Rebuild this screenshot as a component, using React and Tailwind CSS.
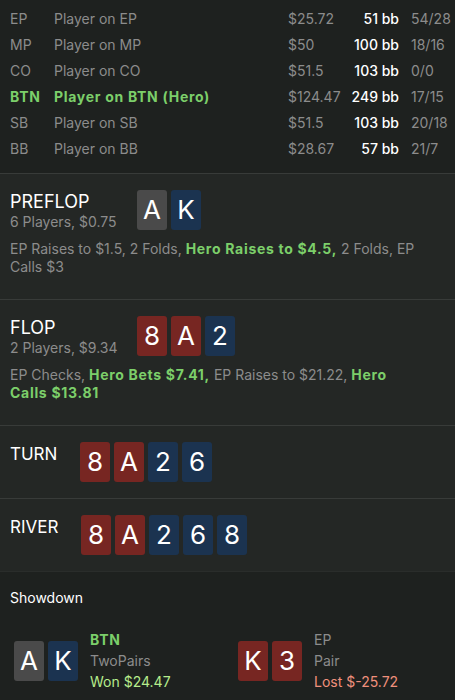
import React from 'react';

const players = [
    { pos: 'EP', name: 'Player on EP', money: '$25.72', bb: '51 bb', stat: '54/28' },
    { pos: 'MP', name: 'Player on MP', money: '$50', bb: '100 bb', stat: '18/16' },
    { pos: 'CO', name: 'Player on CO', money: '$51.5', bb: '103 bb', stat: '0/0' },
    { pos: 'BTN', name: 'Player on BTN (Hero)', money: '$124.47', bb: '249 bb', stat: '17/15', hero: true },
    { pos: 'SB', name: 'Player on SB', money: '$51.5', bb: '103 bb', stat: '20/18' },
    { pos: 'BB', name: 'Player on BB', money: '$28.67', bb: '57 bb', stat: '21/7' },
];

const suitBg = {
    h: 'bg-[#772622]',
    d: 'bg-[#1b3350]',
    s: 'bg-[#4a4a4a]',
};

const Card = ({ rank, suit }) => (
    <div className={`w-[30px] h-[40px] rounded-[3px] flex items-center justify-center text-[26px] leading-none text-white ${suitBg[suit]}`}>
        {rank}
    </div>
);

const Cards = ({ cards }) => (
    <div className="flex gap-[4px]">
        {cards.map((c, i) => (
            <Card key={i} rank={c[0]} suit={c[1]} />
        ))}
    </div>
);

const Hero = ({ children }) => <span className="font-bold tracking-[0.05em] text-[#7ccf6a]">{children}</span>;

const Street = ({ title, sub, cards, titleWidth = 'w-[127px]', titleSize = 'text-[18px]', children }) => (
    <div className="border-t border-[#383b39] bg-[#242725] px-[10px] pt-[16px] pb-[16px]">
        <div className="flex items-start">
            <div className={`${titleWidth} pt-[1px]`}>
                <div className={`${titleSize} leading-[22px] text-white`}>{title}</div>
                {sub && <div className="text-[14px] leading-[18px] text-[#8c8c8c]">{sub}</div>}
            </div>
            <Cards cards={cards} />
        </div>
        {children && (
            <p className="mt-[9px] mb-[7px] w-[414px] text-[14px] leading-[18px] text-[#8c8c8c]">
                {children}
            </p>
        )}
    </div>
);

const ShowdownPlayer = ({ cards, pos, hand, result, won }) => (
    <div className="flex items-center gap-[12px]">
        <Cards cards={cards} />
        <div className="text-[14px] leading-[21px]">
            <div className={won ? 'font-bold tracking-[0.05em] text-[#7ccf6a]' : 'text-[#8c8c8c]'}>{pos}</div>
            <div className="text-[#8c8c8c]">{hand}</div>
            <div className={won ? 'text-[#b6ec8c]' : 'text-[#f0907c]'}>{result}</div>
        </div>
    </div>
);

export default function App() {
    return (
        <div className="min-h-screen bg-[#1e211f] font-['Inter',sans-serif]">
            {/* Players table */}
            <div className="px-[10px] pt-[5px] pb-[12px]">
                {players.map((p) => (
                    <div
                        key={p.pos}
                        className={`flex items-center h-[26px] text-[14px] ${p.hero ? 'font-bold text-[#7ccf6a]' : 'text-[#8c8c8c]'}`}
                    >
                        <div className={`w-[44px] ${p.hero ? 'tracking-[0.05em]' : ''}`}>{p.pos}</div>
                        <div className={`flex-1 ${p.hero ? 'tracking-[0.05em]' : ''}`}>{p.name}</div>
                        <div className="w-[56px] font-normal text-[#8c8c8c]">{p.money}</div>
                        <div className="w-[55px] text-right font-medium text-white">{p.bb}</div>
                        <div className="w-[46px] pl-[12px] font-normal text-[#8c8c8c]">{p.stat}</div>
                    </div>
                ))}
            </div>

            <Street title="PREFLOP" sub="6 Players, $0.75" cards={['As', 'Kd']}>
                EP Raises to $1.5, 2 Folds, <Hero>Hero Raises to $4.5,</Hero> 2 Folds, EP Calls $3
            </Street>

            <Street title="FLOP" sub="2 Players, $9.34" cards={['8h', 'Ah', '2d']}>
                EP Checks, <Hero>Hero Bets $7.41,</Hero> EP Raises to $21.22, <Hero>Hero Calls $13.81</Hero>
            </Street>

            <Street title="TURN" titleWidth="w-[70px]" titleSize="text-[17px]" cards={['8h', 'Ah', '2d', '6d']} />
            <Street title="RIVER" titleWidth="w-[71px]" titleSize="text-[17px]" cards={['8h', 'Ah', '2d', '6d', '8d']} />

            {/* Showdown */}
            <div className="border-t border-[#2a2d2b] bg-[#1e211f] px-[14px] pt-[17px] pb-[16px]">
                <div className="-ml-[4px] text-[14px] leading-[18px] text-white">Showdown</div>
                <div className="mt-[22px] grid grid-cols-[224px_1fr]">
                    <ShowdownPlayer cards={['As', 'Kd']} pos="BTN" hand="TwoPairs" result="Won $24.47" won />
                    <ShowdownPlayer cards={['Kh', '3h']} pos="EP" hand="Pair" result="Lost $-25.72" />
                </div>
            </div>
        </div>
    );
}
